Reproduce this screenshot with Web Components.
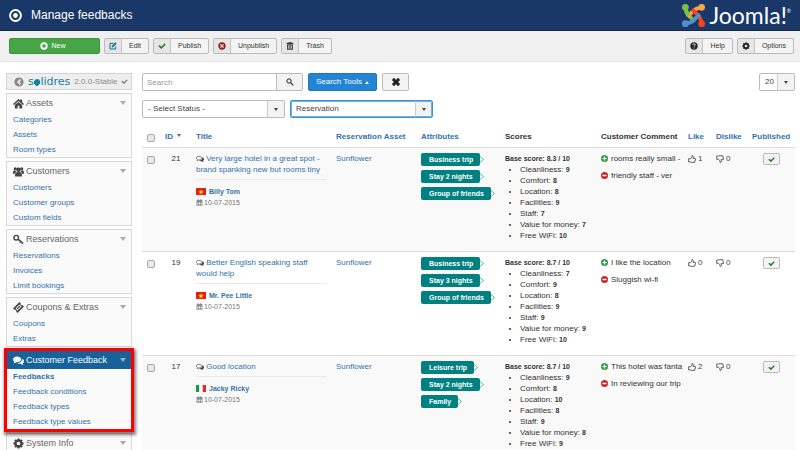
<!DOCTYPE html>
<html lang="en">
<head>
<meta charset="utf-8">
<title>Manage feedbacks</title>
<style>
    body {
        margin: 0;
        background: #fff;
        color: #333;
        font: 8px/11px "Liberation Sans", Arial, sans-serif;
    }
    main {
        display: grid;
        grid-template-columns: 126px 1fr;
        gap: 10px;
        align-items: start;
        padding: 11px 5px 0 6px;
    }
    nav {
        display: flex;
        flex-direction: column;
        gap: 3px;
    }
    .content {
        min-width: 0;
    }
    .spacer {
        flex: 1;
    }
</style>
</head>
<body>
<admin-header>Manage feedbacks</admin-header>

<tool-bar>
    <tool-button kind="new" icon="plus">New</tool-button>
    <tool-button icon="edit" color="#1d6f94">Edit</tool-button>
    <tool-button icon="check" color="#2c7c2c">Publish</tool-button>
    <tool-button icon="cancel" color="#9d1c1c">Unpublish</tool-button>
    <tool-button icon="trash" color="#444">Trash</tool-button>
    <span class="spacer"></span>
    <tool-button icon="help" color="#222">Help</tool-button>
    <tool-button icon="gear" color="#222">Options</tool-button>
</tool-bar>

<main>
    <nav>
        <side-brand version="2.0.0-Stable"></side-brand>
        <side-group icon="home" heading="Assets">
            <side-link>Categories</side-link>
            <side-link>Assets</side-link>
            <side-link>Room types</side-link>
        </side-group>
        <side-group icon="users" heading="Customers">
            <side-link>Customers</side-link>
            <side-link>Customer groups</side-link>
            <side-link>Custom fields</side-link>
        </side-group>
        <side-group icon="key" heading="Reservations">
            <side-link>Reservations</side-link>
            <side-link>Invoices</side-link>
            <side-link>Limit bookings</side-link>
        </side-group>
        <side-group icon="ticket" heading="Coupons &amp; Extras">
            <side-link>Coupons</side-link>
            <side-link>Extras</side-link>
        </side-group>
        <side-group icon="comments" heading="Customer Feedback" active>
            <side-link current>Feedbacks</side-link>
            <side-link>Feedback conditions</side-link>
            <side-link>Feedback types</side-link>
            <side-link>Feedback type values</side-link>
        </side-group>
        <side-group icon="gear" heading="System Info"></side-group>
    </nav>
    <div class="content">
        <search-tools></search-tools>
        <feedback-table></feedback-table>
    </div>
</main>

<script>
const stroke = (d, w = 2) => `<path d="${d}" fill="none" stroke="currentColor" stroke-width="${w}" stroke-linejoin="round"/>`;
const gearTeeth = [0, 45, 90, 135].map(a => `<rect x="9.5" y="1" width="5" height="22" rx="1" transform="rotate(${a} 12 12)"/>`).join('');

// all icons share a 24x24 grid
const ICONS = {
    target: '<circle cx="12" cy="12" r="10" fill="none" stroke="currentColor" stroke-width="3.6"/><circle cx="12" cy="12" r="4.4"/>',
    plus: '<path fill-rule="evenodd" d="M12 1a11 11 0 1 0 0 22a11 11 0 0 0 0-22zM10 6h4v4h4v4h-4v4h-4v-4H6v-4h4z"/>',
    edit: stroke('M20 13v8H3V4h11', 3) + '<path d="M8 17l1-6L19 1l4 4-10 10z"/>',
    check: '<path d="M1 13l4-4 5 5L20 4l3 4-13 13z"/>',
    cancel: '<path fill-rule="evenodd" d="M12 1a11 11 0 1 0 0 22a11 11 0 0 0 0-22zM8.5 6L12 9.500 15.500 6 18 8.500 14.500 12 18 15.500 15.500 18 12 14.500 8.500 18 6 15.500 9.500 12 6 8.500z"/>',
    trash: '<path fill-rule="evenodd" d="M2 2h6V0h8v2h6v4H2zM3 7h18v16H3zM7 10v10h2V10zM11 10v10h2V10zM15 10v10h2V10z"/>',
    help: '<circle cx="12" cy="12" r="11"/><path d="M8 9c0-5 8-5 8-.500 0 3-4 2.500-4 5.500M12 16.500v3" fill="none" stroke="#e6e6e6" stroke-width="3"/>',
    gear: `<mask id="m"><rect width="24" height="24" fill="#fff"/><circle cx="12" cy="12" r="4" fill="#000"/></mask><g mask="url(#m)"><circle cx="12" cy="12" r="8.500"/>${gearTeeth}</g>`,
    search: '<circle cx="9" cy="9" r="6.500" fill="none" stroke="currentColor" stroke-width="3"/><path d="M13 15l2-2 8 8-2.500 2.500z"/>',
    times: '<path d="M1 4l3-3h4l4 5 4-5h4l3 3v4l-5 4 5 4v4l-3 3h-4l-4-5-4 5H4l-3-3v-4l5-4-5-4z"/>',
    back: '<path fill-rule="evenodd" d="M12 1a11 11 0 1 0 0 22a11 11 0 0 0 0-22zM14 5l3 3-4 4 4 4-3 3-7-7z"/>',
    home: '<path d="M12 2l4 3.500V3h4v6l4 4-2 2L12 6.500 2 15l-2-2z"/><path d="M12 8.500l8 7V23h-6v-6h-4v6H4v-7.500z"/>',
    users: '<circle cx="5" cy="6" r="3.500"/><circle cx="19" cy="6" r="3.500"/><circle cx="12" cy="8" r="5"/><path d="M0 17v-4c0-3 4-3.500 6-2.500L7 13c-2 1-3 2.500-3 4zM24 17v-4c0-3-4-3.500-6-2.500L17 13c2 1 3 2.500 3 4zM4.500 23v-5c0-4 4-5 7.500-5s7.500 1 7.500 5v5z"/>',
    key: '<circle cx="7" cy="8" r="5" fill="none" stroke="currentColor" stroke-width="3"/><path d="M10 13l2.500-2.500L23 19l-3 4-2-2 1.500-1.500-2-1.500-2 2-2-2 1.500-1.500z"/>',
    ticket: '<path fill-rule="evenodd" d="M0 14L14 0l3 3c-1 3 1 5 4 4l3 3-14 14-3-3c1-3-1-5-4-4zM5.500 14L10 18.500 18.500 10 14 5.500z"/><path d="M8 14l6-6 2 2-6 6z"/>',
    comments: '<path d="M9 3c5 0 9 3 9 6.500S14 16 9 16l-2-.200C5.500 17 3.500 18 1 18c1-1 2-2 2-3.500C1 13 0 11.500 0 9.500 0 6 4 3 9 3z"/><path d="M20 8c2.500 1 4 3 4 5.500 0 2-1 3.500-3 4.500 0 1.500 1 2.500 2 3.500-3 0-4.500-1-6-2.500-3 .500-6 0-8-1.500C15 17.500 20 14 20 8z"/>',
    talk: stroke('M9 4c4.500 0 8 2.500 8 5.500S13.500 15 9 15l-2-.200-4 2 1-3C2 12.500 1 11 1 9.500 1 6.500 4.500 4 9 4z') + '<path d="M19 7c3 1 5 3.500 5 6s-1 3.500-3 4.500c0 1.500 1 2.500 2 3.500-3 0-4.500-1-6-2.500-3 .500-6 0-8-2 6 0 11-3 10-9.500z"/>',
    calendar: '<path fill-rule="evenodd" d="M2 4h4V1h3v3h6V1h3v3h4v19H2zM4 9v3h4V9zM10 9v3h4V9zM16 9v3h4V9zM4 14v3h4v-3zM10 14v3h4v-3zM16 14v3h4v-3zM4 19v2h4v-2zM10 19v2h4v-2zM16 19v2h4v-2z"/>',
    like: stroke('M2 11h6c3-2 4-5 4-9 5-1 5 4 3 8h7v5l-2 7H9l-2-1H2z', 2.5),
    dislike: stroke('M2 13h6c3 2 4 5 4 9 5 1 5-4 3-8h7V9l-2-7H9L7 3H2z', 2.5),
    pro: '<circle cx="12" cy="12" r="12"/><path d="M10 5h4v5h5v4h-5v5h-4v-5H5v-4h5z" fill="#fff"/>',
    con: '<circle cx="12" cy="12" r="12"/><path d="M5 9.500h14v5H5z" fill="#fff"/>',
    vn: '<path d="M0 0h24v18H0z" fill="#e8201c"/><path d="M12 3l1.500 4.500H18L14.500 10.500 16 15l-4-3-4 3 1.500-4.500L6 7.500h4.500z" fill="#ff0"/>',
    it: '<path d="M0 0h8v18H0z" fill="#189a43"/><path d="M8 0h8v18H8z" fill="#fff"/><path d="M16 0h8v18h-8z" fill="#e02a35"/>'
};

class SrIcon extends HTMLElement {
    constructor() {
        super();
        this.attachShadow({ mode: 'open' });
    }

    connectedCallback() {
        const name = this.getAttribute('name');
        const flag = name === 'vn' || name === 'it';
        this.shadowRoot.innerHTML = `
            <style>
                :host { display: inline-block; width: var(--size, 8px); vertical-align: middle; flex: none; }
                svg { display: block; width: 100%; fill: currentColor; }
            </style>
            <svg viewBox="0 0 24 ${flag ? 18 : 24}" aria-hidden="true">${ICONS[name]}</svg>
        `;
    }
}

class AdminHeader extends HTMLElement {
    constructor() {
        super();
        const arm = (deg, color) => `
            <g transform="rotate(${deg} 12 12)" fill="${color}">
                <circle cx="3.500" cy="3.500" r="3.500"/>
                <path d="M4 4C4 8 4.500 9.500 7 12l6.500 6.500" fill="none" stroke="${color}" stroke-width="4"/>
            </g>`;
        this.attachShadow({ mode: 'open' }).innerHTML = `
            <style>
                :host {
                    display: flex;
                    align-items: center;
                    height: 30px;
                    padding: 0 9px;
                    border-bottom: 1px solid #132a4e;
                    background: #1a3867;
                    color: #fff;
                }
                sr-icon { --size: 13px; margin-right: 9px; }
                h1 { flex: 1; margin: 0; font-size: 12px; line-height: 16px; font-weight: normal; }
                .logo { display: flex; align-items: center; gap: 4px; }
                .logo svg { width: 23px; height: 23px; }
                .logo span { font: 23px/24px Lato, sans-serif; }
                sup { font-size: 5px; line-height: 5px; vertical-align: 11px; }
            </style>
            <sr-icon name="target"></sr-icon>
            <h1><slot></slot></h1>
            <div class="logo">
                <svg viewBox="0 0 24 24" aria-hidden="true">
                    ${arm(0, '#7ac143')}${arm(90, '#f9a541')}${arm(180, '#f44321')}${arm(270, '#5091cd')}
                    <path d="M4 4C4 8 4.500 9.500 7 12" fill="none" stroke="#7ac143" stroke-width="4"/>
                </svg>
                <span>Joomla!<sup>®</sup></span>
            </div>
        `;
    }
}

class ToolBar extends HTMLElement {
    constructor() {
        super();
        this.attachShadow({ mode: 'open' }).innerHTML = `
            <style>
                :host {
                    display: flex;
                    gap: 4px;
                    padding: 7px 6px 7px 9px;
                    border-bottom: 1px solid #e0e0e0;
                    background: #f0f0f0;
                }
            </style>
            <slot></slot>
        `;
    }
}

class ToolButton extends HTMLElement {
    constructor() {
        super();
        this.attachShadow({ mode: 'open' });
    }

    connectedCallback() {
        this.shadowRoot.innerHTML = `
            <style>
                :host { display: block; }
                button {
                    display: flex;
                    align-items: stretch;
                    box-sizing: border-box;
                    height: 16px;
                    padding: 0;
                    border: 1px solid #bbb;
                    border-radius: 2px;
                    background: #f4f4f4;
                    color: #333;
                    font: 7px/14px "Liberation Sans", Arial, sans-serif;
                    overflow: hidden;
                }
                .icon {
                    display: flex;
                    align-items: center;
                    padding: 0 4px;
                    border-right: 1px solid #c4c4c4;
                    background: #e6e6e6;
                    color: ${this.getAttribute('color')};
                }
                .text { padding: 0 7px; }
                :host([kind="new"]) button {
                    width: 91px;
                    justify-content: center;
                    border-color: #3c953c;
                    background: #46a546;
                    color: #fff;
                }
                :host([kind="new"]) .icon { padding: 0; border: 0; background: none; color: #fff; }
                :host([kind="new"]) .text { padding: 0 3px; }
            </style>
            <button type="button">
                <span class="icon"><sr-icon name="${this.getAttribute('icon')}"></sr-icon></span>
                <span class="text"><slot></slot></span>
            </button>
        `;
    }
}

class SideBrand extends HTMLElement {
    constructor() {
        super();
        this.attachShadow({ mode: 'open' });
    }

    connectedCallback() {
        this.shadowRoot.innerHTML = `
            <style>
                :host {
                    display: flex;
                    align-items: center;
                    box-sizing: border-box;
                    height: 17px;
                    padding: 0 3px 0 7px;
                    border: 1px solid #d4d4d4;
                    background: #eee;
                    color: #888;
                }
                .back { --size: 10px; margin-right: 4px; }
                .brand { margin-right: 4px; color: #17829b; font: 11px/14px "DejaVu Sans", sans-serif; }
                .dot { background: radial-gradient(circle at 50% 60%, currentColor 3px, transparent 3px); }
                .ok { --size: 7px; margin-left: auto; }
            </style>
            <sr-icon class="back" name="back"></sr-icon>
            <span class="brand">s<span class="dot">o</span>lidres</span>
            <span>${this.getAttribute('version')}</span>
            <sr-icon class="ok" name="check"></sr-icon>
        `;
    }
}

class SideGroup extends HTMLElement {
    constructor() {
        super();
        this.attachShadow({ mode: 'open' });
    }

    connectedCallback() {
        this.shadowRoot.innerHTML = `
            <style>
                :host {
                    display: block;
                    border: 1px solid #d9d9d9;
                    background: #fafafa;
                }
                h2 {
                    display: flex;
                    align-items: center;
                    gap: 2px;
                    height: 18px;
                    margin: 0;
                    padding: 0 5px 0 6px;
                    color: #666;
                    font-size: 9px;
                    font-weight: normal;
                    white-space: nowrap;
                }
                h2 sr-icon { --size: 11px; color: #444; }
                .arrow {
                    margin-left: auto;
                    border: 3px solid transparent;
                    border-top: 4px solid #aaa;
                    border-bottom: 0;
                }
                :host([active]) {
                    outline: 3px solid #f00;
                    outline-offset: -1px;
                    box-shadow: 1px 2px 3px 3px rgba(0, 0, 0, 0.5);
                    z-index: 1;
                }
                :host([active]) h2 { background: #15639a; color: #fff; }
                :host([active]) h2 sr-icon { color: #fff; }
            </style>
            <h2><sr-icon name="${this.getAttribute('icon')}"></sr-icon>${this.getAttribute('heading').replace('&', '&amp;')}<span class="arrow"></span></h2>
            <slot></slot>
        `;
    }
}

class SideLink extends HTMLElement {
    constructor() {
        super();
        this.attachShadow({ mode: 'open' }).innerHTML = `
            <style>
                :host { display: block; padding-left: 6px; line-height: 15px; }
                :host([current]) { font-weight: bold; }
                a { color: #3572ac; text-decoration: none; }
            </style>
            <a href="#"><slot></slot></a>
        `;
    }
}

class DropDown extends HTMLElement {
    constructor() {
        super();
        this.attachShadow({ mode: 'open' });
    }

    connectedCallback() {
        this.shadowRoot.innerHTML = `
            <style>
                :host { display: block; position: relative; width: var(--width, 143px); }
                select {
                    appearance: none;
                    display: block;
                    box-sizing: border-box;
                    width: 100%;
                    height: 18px;
                    margin: 0;
                    padding: 0 18px 0 5px;
                    border: 1px solid #bbb;
                    border-radius: 2px;
                    background: linear-gradient(#f3f3f3, #f3f3f3) right / 16px 100% no-repeat #fff;
                    color: #444;
                    font: 8px/16px "Liberation Sans", Arial, sans-serif;
                }
                .arrow {
                    position: absolute;
                    inset: 1px 1px 1px auto;
                    display: grid;
                    place-items: center;
                    width: 16px;
                    border-left: 1px solid #ccc;
                    pointer-events: none;
                }
                .arrow::after {
                    content: "";
                    border: 2px solid transparent;
                    border-top: 3px solid #444;
                    border-bottom: 0;
                }
                :host([focused]) select { border-color: #3d94dc; box-shadow: inset 0 0 0 1px #6db1ea; }
            </style>
            <select aria-label="${this.getAttribute('label')}"><option>${this.getAttribute('value')}</option></select>
            <span class="arrow"></span>
        `;
    }
}

class SearchTools extends HTMLElement {
    constructor() {
        super();
        this.attachShadow({ mode: 'open' }).innerHTML = `
            <style>
                :host { display: grid; gap: 9px; margin-bottom: 8px; }
                .row { display: flex; gap: 5px; }
                .group { display: flex; }
                input, button {
                    box-sizing: border-box;
                    height: 18px;
                    margin: 0;
                    border: 1px solid #bbb;
                    font: 8px/16px "Liberation Sans", Arial, sans-serif;
                }
                input { width: 135px; padding: 0 4px; border-radius: 2px 0 0 2px; background: #fff; }
                input::placeholder { color: #999; }
                button {
                    display: flex;
                    align-items: center;
                    justify-content: center;
                    width: 27px;
                    padding: 0;
                    border-radius: 2px;
                    background: #f3f3f3;
                    color: #222;
                }
                .group button { margin-left: -1px; border-radius: 0 2px 2px 0; }
                button.tools {
                    gap: 3px;
                    width: 69px;
                    border-color: #1f76bd;
                    background: #2384d3;
                    color: #fff;
                }
                .tools::after {
                    content: "";
                    border: 2px solid transparent;
                    border-bottom: 3px solid #fff;
                    border-top: 0;
                }
                .limit { --width: 36px; margin-left: auto; }
            </style>
            <div class="row">
                <div class="group">
                    <input type="text" placeholder="Search" aria-label="Search">
                    <button type="button" aria-label="Search"><sr-icon name="search"></sr-icon></button>
                </div>
                <button class="tools" type="button">Search Tools</button>
                <button type="button" aria-label="Clear"><sr-icon name="times"></sr-icon></button>
                <drop-down class="limit" label="Limit" value="20"></drop-down>
            </div>
            <div class="row">
                <drop-down label="Status" value="- Select Status -"></drop-down>
                <drop-down label="Scope" value="Reservation" focused></drop-down>
            </div>
        `;
    }
}

class AttributeTag extends HTMLElement {
    constructor() {
        super();
        this.attachShadow({ mode: 'open' }).innerHTML = `
            <style>
                :host {
                    display: block;
                    position: relative;
                    width: fit-content;
                    padding: 0 7px 0 8px;
                    border-radius: 2px;
                    background: #008080;
                    color: #fff;
                    font-size: 7px;
                    font-weight: bold;
                    line-height: 13px;
                    white-space: nowrap;
                }
                /* pointed end of the tag */
                svg { position: absolute; right: -4px; top: 3px; width: 5px; height: 7px; }
            </style>
            <slot></slot>
            <svg viewBox="0 0 5 7" aria-hidden="true"><path d="M1 .500L4.500 3.500 1 6.500z" fill="#fff"/><path d="M1 .500L4.500 3.500 1 6.500" fill="none" stroke="#4fa8a8" stroke-width=".900"/></svg>
        `;
    }
}

const SCORE_NAMES = ['Cleanliness', 'Comfort', 'Location', 'Facilities', 'Staff', 'Value for money', 'Free WiFi'];

class ScoreList extends HTMLElement {
    constructor() {
        super();
        this.attachShadow({ mode: 'open' });
    }

    connectedCallback() {
        const scores = this.getAttribute('scores').split(',');
        this.shadowRoot.innerHTML = `
            <style>
                :host { display: block; white-space: nowrap; }
                b { font-size: 7px; }
                ul { margin: 0 0 5px; padding: 0 0 0 15px; }
            </style>
            <b>Base score: ${this.getAttribute('base')} / 10</b>
            <ul>${SCORE_NAMES.map((name, i) => `<li>${name}: <b>${scores[i]}</b></li>`).join('')}</ul>
        `;
    }
}

const FEEDBACKS = [
    { id: 21, title: 'Very large hotel in a great spot - brand spanking new but rooms tiny', flag: 'vn', name: 'Billy Tom',
      tags: ['Business trip', 'Stay 2 nights', 'Group of friends'], base: '8.3', scores: [9, 8, 8, 9, 7, 7, 10],
      pro: 'rooms really small -', con: 'friendly staff - ver', likes: 1 },
    { id: 19, title: 'Better English speaking staff would help', flag: 'vn', name: 'Mr. Pee Little',
      tags: ['Business trip', 'Stay 3 nights', 'Group of friends'], base: '8.7', scores: [7, 9, 8, 9, 9, 9, 10],
      pro: 'I like the location', con: 'Sluggish wi-fi', likes: 0 },
    { id: 17, title: 'Good location', flag: 'it', name: 'Jacky Ricky',
      tags: ['Leisure trip', 'Stay 2 nights', 'Family'], base: '8.7', scores: [9, 8, 10, 8, 9, 8, 9],
      pro: 'This hotel was fanta', con: 'In reviewing our trip', likes: 2 }
];

class FeedbackTable extends HTMLElement {
    constructor() {
        super();
        this.attachShadow({ mode: 'open' });
    }

    renderRow(item) {
        return `
            <tr>
                <td><input type="checkbox" aria-label="Select ${item.id}"></td>
                <td class="center">${item.id}</td>
                <td>
                    <a href="#"><sr-icon name="talk"></sr-icon> ${item.title}</a>
                    <div class="guest">
                        <div><sr-icon class="flag" name="${item.flag}"></sr-icon><a href="#"><b>${item.name}</b></a></div>
                        <div class="date"><sr-icon name="calendar"></sr-icon>10-07-2015</div>
                    </div>
                </td>
                <td><a href="#">Sunflower</a></td>
                <td><div class="tags">${item.tags.map(tag => `<attribute-tag>${tag}</attribute-tag>`).join('')}</div></td>
                <td><score-list base="${item.base}" scores="${item.scores}"></score-list></td>
                <td>
                    <div class="comment pro"><sr-icon name="pro"></sr-icon><span>${item.pro}</span></div>
                    <div class="comment con"><sr-icon name="con"></sr-icon><span>${item.con}</span></div>
                </td>
                <td><div class="vote"><sr-icon name="like"></sr-icon>${item.likes}</div></td>
                <td><div class="vote"><sr-icon name="dislike"></sr-icon>0</div></td>
                <td><button type="button" aria-label="Published"><sr-icon name="check"></sr-icon></button></td>
            </tr>`;
    }

    connectedCallback() {
        const widths = ['18px', '31px', 'auto', '85px', '84px', '96px', '87px', '28px', '36px', '48px'];
        this.shadowRoot.innerHTML = `
            <style>
                :host { display: block; }
                table { width: 100%; border-collapse: separate; border-spacing: 0; table-layout: fixed; }
                th { height: 20px; padding: 0 0 1px 5px; text-align: left; white-space: nowrap; }
                td { padding: 5px 4px 5px 5px; border-top: 1px solid #ddd; vertical-align: top; }
                tbody tr:nth-child(odd) { background: #f9f9f9; }
                a { color: #3572ac; text-decoration: none; }
                input {
                    appearance: none;
                    display: block;
                    box-sizing: border-box;
                    width: 8px;
                    height: 8px;
                    margin: 3px 0 0;
                    border: 1px solid #aaa;
                    border-radius: 2px;
                    background: #e8e8e8;
                }
                .center { text-align: center; }
                .sort {
                    display: inline-block;
                    margin-left: 4px;
                    border: 2px solid transparent;
                    border-top: 3px solid #3572ac;
                    border-bottom: 0;
                    vertical-align: 2px;
                }
                td > a { display: block; }
                td > a sr-icon { color: #444; }
                .guest { margin-top: 4px; padding-top: 6px; border-top: 1px solid #eaeaea; font-size: 7px; }
                .guest div { display: flex; align-items: center; }
                .flag { --size: 10px; margin-right: 3px; }
                .date { gap: 1px; color: #777; --size: 7px; }
                .tags { display: grid; gap: 4px; }
                .comment {
                    display: flex;
                    align-items: center;
                    gap: 3px;
                    margin-bottom: 6px;
                    white-space: nowrap;
                    --size: 7px;
                }
                .pro sr-icon { color: #3a9a47; }
                .con sr-icon { color: #c22a23; }
                .vote { display: flex; align-items: center; gap: 2px; color: #444; }
                button {
                    display: grid;
                    place-items: center;
                    width: 17px;
                    height: 12px;
                    margin: 0 auto;
                    padding: 0;
                    border: 1px solid #bbb;
                    border-radius: 2px;
                    background: #f3f3f3;
                    color: #2c7c2c;
                    --size: 7px;
                }
            </style>
            <table>
                <colgroup>${widths.map(w => `<col style="width: ${w}">`).join('')}</colgroup>
                <thead>
                    <tr>
                        <th><input type="checkbox" aria-label="Check all"></th>
                        <th><a href="#">ID<span class="sort"></span></a></th>
                        <th><a href="#">Title</a></th>
                        <th><a href="#">Reservation Asset</a></th>
                        <th><a href="#">Attributes</a></th>
                        <th>Scores</th>
                        <th>Customer Comment</th>
                        <th><a href="#">Like</a></th>
                        <th><a href="#">Dislike</a></th>
                        <th><a href="#">Published</a></th>
                    </tr>
                </thead>
                <tbody>${FEEDBACKS.map(item => this.renderRow(item)).join('')}</tbody>
            </table>
        `;
    }
}

customElements.define('sr-icon', SrIcon);
customElements.define('admin-header', AdminHeader);
customElements.define('tool-bar', ToolBar);
customElements.define('tool-button', ToolButton);
customElements.define('side-brand', SideBrand);
customElements.define('side-group', SideGroup);
customElements.define('side-link', SideLink);
customElements.define('drop-down', DropDown);
customElements.define('search-tools', SearchTools);
customElements.define('attribute-tag', AttributeTag);
customElements.define('score-list', ScoreList);
customElements.define('feedback-table', FeedbackTable);
</script>
</body>
</html>
